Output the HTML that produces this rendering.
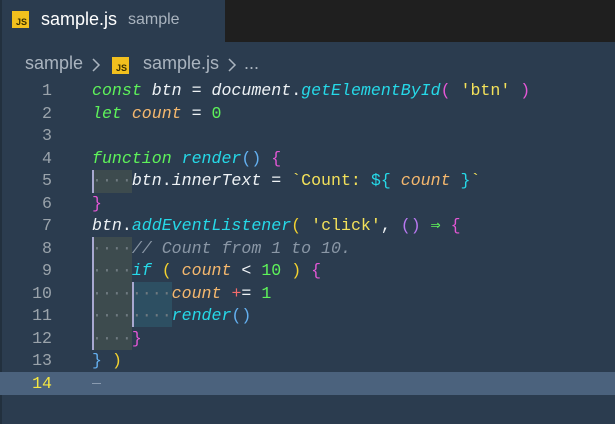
<!DOCTYPE html><html><head><style>
body{margin:0;width:615px;height:424px;background:#2b3c4f;overflow:hidden;font-family:"Liberation Sans",sans-serif;position:relative}
.strip{position:absolute;left:0;top:0;width:2px;height:424px;background:#22303e}
.topr{position:absolute;left:225px;top:0;width:390px;height:42px;background:#1f1f1f}
.js{position:absolute;width:17px;height:17px;background:#f2c01e;color:#3a3000;font:bold 9px "Liberation Sans",sans-serif;display:flex;align-items:flex-end;justify-content:flex-end;padding:0 2px 1px 0;box-sizing:border-box}
.t{position:absolute;white-space:pre}
.code{position:absolute;left:0;top:80px;width:615px;font-family:"Liberation Mono",monospace;font-size:16.6px}
.ln{position:absolute;height:22.5px;line-height:22.5px;white-space:pre;width:615px}
.n{position:absolute;left:0;width:52px;text-align:right;color:#9aa3ab}
.c{position:absolute;left:92px;color:#eef2f5}
.k{color:#5ef25a;font-style:italic}.v{color:#eef2f5;font-style:italic}.o{color:#f5b86e;font-style:italic}.f{color:#26d9e8;font-style:italic}
.s{color:#f3e15a}.g{color:#5ef25a}.p{color:#e457d6}.b{color:#64b0f0}.y{color:#f3d230}.cm{color:#8a97a6;font-style:italic}.cy{color:#26d9e8}.pu{color:#b878f0}.r{color:#f36b6b}
.d{color:#6f7a80}
.blk{position:absolute;background:#3d4b4e;border-left:2px solid #a8a8d0;box-sizing:border-box}
.blk2{position:absolute;background:#2d4f62;border-left:2px solid #a8a8d0;box-sizing:border-box}
</style></head><body>
<div class="strip"></div><div class="topr"></div>
<div class="js" style="left:12px;top:11px">JS</div>
<div class="t" style="left:41px;top:9px;font-size:18px;color:#fff">sample.js</div>
<div class="t" style="left:128px;top:11px;font-size:16px;color:#aab4bf">sample</div>
<div class="t" style="left:25px;top:53px;font-size:18px;color:#aab4bf">sample</div>
<svg style="position:absolute;left:91px;top:57px" width="10" height="16"><path d="M2 2 L8 8 L2 14" fill="none" stroke="#aab4bf" stroke-width="1.5"/></svg>
<div class="js" style="left:112px;top:57px">JS</div>
<div class="t" style="left:143px;top:53px;font-size:18px;color:#aab4bf">sample.js</div>
<svg style="position:absolute;left:227px;top:57px" width="10" height="16"><path d="M2 2 L8 8 L2 14" fill="none" stroke="#aab4bf" stroke-width="1.5"/></svg>
<div class="t" style="left:244px;top:53px;font-size:18px;color:#aab4bf">...</div>
<div style="position:absolute;left:0;top:372px;width:615px;height:23px;background:#4b627d"></div>
<div style="position:absolute;left:92px;top:383px;width:9px;height:1px;background:#8a9bb0"></div>
<div class="blk" style="left:92px;top:170px;width:40px;height:23px"></div>
<div class="blk" style="left:92px;top:237px;width:40px;height:113px"></div>
<div class="blk2" style="left:132px;top:282px;width:40px;height:45px"></div>
<div class="code">
<div class="ln" style="top:0"><span class="n">1</span><span class="c"><span class="k">const</span> <span class="v">btn</span> = <span class="v">document</span>.<span class="f">getElementById</span><span class="p">(</span> <span class="s">'btn'</span> <span class="p">)</span></span></div>
<div class="ln" style="top:22.5px"><span class="n">2</span><span class="c"><span class="k">let</span> <span class="o">count</span> = <span class="g">0</span></span></div>
<div class="ln" style="top:45px"><span class="n">3</span></div>
<div class="ln" style="top:67.5px"><span class="n">4</span><span class="c"><span class="k">function</span> <span class="f">render</span><span class="b">()</span> <span class="p">{</span></span></div>
<div class="ln" style="top:90px"><span class="n">5</span><span class="c"><span class="d">····</span><span class="v">btn</span>.<span class="v">innerText</span> = <span class="s">`Count: </span><span class="cy">${</span> <span class="o">count</span> <span class="cy">}</span><span class="s">`</span></span></div>
<div class="ln" style="top:112.5px"><span class="n">6</span><span class="c"><span class="p">}</span></span></div>
<div class="ln" style="top:135px"><span class="n">7</span><span class="c"><span class="v">btn</span>.<span class="f">addEventListener</span><span class="y">(</span> <span class="s">'click'</span>, <span class="pu">()</span> <span class="g">⇒</span> <span class="p">{</span></span></div>
<div class="ln" style="top:157.5px"><span class="n">8</span><span class="c"><span class="d">····</span><span class="cm">// Count from 1 to 10.</span></span></div>
<div class="ln" style="top:180px"><span class="n">9</span><span class="c"><span class="d">····</span><span class="f">if</span> <span class="y">(</span> <span class="o">count</span> &lt; <span class="g">10</span> <span class="y">)</span> <span class="p">{</span></span></div>
<div class="ln" style="top:202.5px"><span class="n">10</span><span class="c"><span class="d">········</span><span class="o">count</span> <span class="r">+</span>= <span class="g">1</span></span></div>
<div class="ln" style="top:225px"><span class="n">11</span><span class="c"><span class="d">········</span><span class="f">render</span><span class="b">()</span></span></div>
<div class="ln" style="top:247.5px"><span class="n">12</span><span class="c"><span class="d">····</span><span class="p">}</span></span></div>
<div class="ln" style="top:270px"><span class="n">13</span><span class="c"><span class="b">}</span> <span class="y">)</span></span></div>
<div class="ln" style="top:292.5px"><span class="n" style="color:#f5e642">14</span></div>
</div>
</body></html>
